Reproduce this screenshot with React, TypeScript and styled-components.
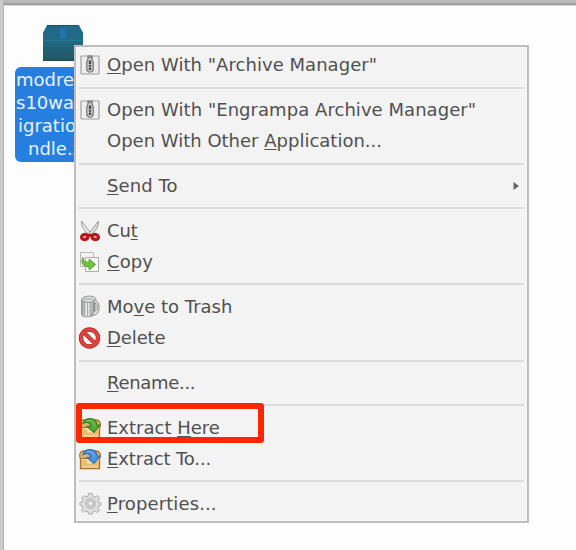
import React from "react";
import styled, { createGlobalStyle } from "styled-components";

const GlobalStyle = createGlobalStyle`
  * { box-sizing: border-box; }
  body { margin: 0; background: #fdfdfd; font-family: "DejaVu Sans", sans-serif; overflow: hidden; }
`;

const Desktop = styled.main`
  position: relative;
  width: 576px;
  height: 550px;
  overflow: hidden;
  background: #fdfdfd;
  border-left: 3px solid #cbcbcb;
  box-shadow: inset 1px 0 #b2b2b2;
`;

const TopBar = styled.div`
  height: 6px;
  margin-left: -3px;
  background: linear-gradient(#b9b9b9 0 3px, #a0a0a0 3px 5px, #d5d5d5 5px);
`;

const FileItem = styled.div`
  display: flex;
  flex-direction: column;
  align-items: center;
  width: 98px;
  margin: 18px 0 0 12px;
  svg { margin-left: -2px; }
`;

const FileLabel = styled.div`
  width: 98px;
  height: 95px;
  margin-top: 5px;
  padding: 1px 0 0 1px;
  border-radius: 6px;
  background: #267fdf;
  color: #e9f2fc;
  font-size: 18px;
  line-height: 23px;
  white-space: pre;
`;

const LabelLine = styled.div<{ $indent: number }>`
  padding-left: ${(p) => p.$indent}px;
`;

const Menu = styled.div`
  position: absolute;
  left: 71px;
  top: 45px;
  width: 455px;
  height: 478px;
  padding: 3.6px 4px;
  border: 1px solid #c0c0c0;
  box-shadow: inset 0 0 0 1px #b9b9b9, inset 0 0 0 2px #f8f8f8;
  background: #f3f3f3;
`;

const Row = styled.div`
  display: flex;
  align-items: center;
  height: 31.4px;
  color: #505050;
  font-size: 18px;
  line-height: 24px;
  white-space: pre;
`;

const IconSlot = styled.span`
  display: flex;
  flex: none;
  width: 22px;
  height: 24px;
  margin: 0 6px 0 0;
  align-items: center;
  justify-content: center;
  svg { display: block; flex: none; }
`;

const Label = styled.span<{ $spacing: number }>`
  flex: 1;
  letter-spacing: ${(p) => p.$spacing}px;
`;

const Mnemonic = styled.span`
  text-decoration: underline;
  text-decoration-thickness: 1.4px;
  text-underline-offset: 2px;
  text-decoration-skip-ink: none;
`;

const Separator = styled.div`
  display: flex;
  align-items: center;
  height: 13.3px;
  &::after { content: ""; flex: 1; height: 2px; background: #dcdcdc; }
`;

const Highlight = styled.div`
  position: absolute;
  left: 73px;
  top: 403px;
  width: 188px;
  height: 40px;
  border: 6px solid #ff2600;
  border-radius: 3px;
`;

const PackageIcon = () => (
  <svg width="42" height="38" viewBox="0 0 42 38">
    <defs>
      <linearGradient id="box" x1="0" y1="0" x2="0" y2="1">
        <stop offset="0" stopColor="#21759b" />
        <stop offset="1" stopColor="#225762" />
      </linearGradient>
    </defs>
    <path d="M5 1.500h32l4 7v28H1v-28z" fill="url(#box)" />
    <path d="M5 1.500h32l4 10H1z" fill="#216988" />
    <path d="M5 1.500h32" stroke="#1b5067" />
    <path d="M18 4h6v9l-3 1.500-3-1.500z" fill="#2372b5" />
    <path d="M1 16.500h40" stroke="#25779a" />
    <path d="M1 36.500h40" stroke="#1c4850" />
  </svg>
);

const ArchiveIcon = () => (
  <svg width="20" height="20" viewBox="0 0 20 20">
    <rect x="1" y="1" width="18" height="18" rx=".8" fill="#eeeeee" stroke="#a0a0a0" strokeWidth="1.200" />
    <path d="M8 1v3L6.800 7v8L8.500 17h3l1.700-2V7L12 4V1z" fill="#d0d0d0" stroke="#707070" strokeWidth="1.200" />
    <path d="M8 2.500h4" stroke="#777" />
    <path d="M10 5.500v9.500" stroke="#4b4b4b" strokeWidth="2.400" strokeDasharray="3.500 .8 2 .8" />
  </svg>
);

const CutIcon = () => (
  <svg width="22" height="22" viewBox="0 0 22 22">
    <path d="M2.500 1l10 13-2.500 1C6.500 11.500 2 7 2.500 1z" fill="#eee" stroke="#999" />
    <path d="M19.500 1l-10 13 2.500 1c3.500-3.500 8-8 7.500-14z" fill="#ddd" stroke="#999" />
    <ellipse cx="5.800" cy="17" rx="3.200" ry="2.600" transform="rotate(-15 5.800 17)" fill="#e9bcbc" stroke="#b9151f" strokeWidth="3.300" />
    <ellipse cx="16.200" cy="17" rx="3.200" ry="2.600" transform="rotate(15 16.200 17)" fill="#e9bcbc" stroke="#b9151f" strokeWidth="3.300" />
    <path d="M8 15l3-1.500 3 1.500-3 2z" fill="#ad1823" />
  </svg>
);

const CopyIcon = () => (
  <svg width="22" height="22" viewBox="0 0 22 22">
    <path d="M1.500 1.500h13v14h-13z" fill="#f3f3f3" stroke="#b7b7b7" />
    <path d="M6.500 6.500h13v14h-13z" fill="#fafafa" stroke="#aaa" />
    <path d="M4.200 6.500c0 3.500 1.500 4.700 6 4.700V8l6.300 5.500-6.300 5.200v-3.200c-6.500.5-9-4.200-6-9z" fill="#70c837" stroke="#4c982b" />
  </svg>
);

const TrashIcon = () => (
  <svg width="22" height="23" viewBox="0 0 22 23">
    <defs>
      <linearGradient id="can" x2="1">
        <stop stopColor="#939795" />
        <stop offset=".45" stopColor="#efefef" />
        <stop offset="1" stopColor="#a5a9a7" />
      </linearGradient>
    </defs>
    <path d="M2.500 5v15c2 2.500 10 2.500 12 0V5z" fill="url(#can)" stroke="#959997" />
    <path d="M5.500 7v13M8.500 7v14M11.500 7v14" stroke="#a5a9a7" />
    <path d="M2.500 5c1-5 12-5 14.500-1.500L15 6.500c-4 1-10 1-12.500-1.500z" fill="#e0e1e0" stroke="#929694" />
    <path d="M4 4h10" stroke="#999d9b" />
    <path d="M14.500 5c7-1 7.500 14 1 15h-3c4-3 3.500-10 2-15z" fill="#e0e0e0" stroke="#858a88" />
    <path d="M16 8c3 0 3 8 0 8z" fill="#eee" stroke="#858a88" />
  </svg>
);

const DeleteIcon = () => (
  <svg width="24" height="24" viewBox="0 0 24 24">
    <circle cx="11.500" cy="12" r="8.500" fill="#f7f7f7" stroke="#b92727" strokeWidth="4.400" />
    <circle cx="11.500" cy="12" r="8.500" fill="none" stroke="#d94541" strokeWidth="3" />
    <path d="M6 6.500l11 11" stroke="#bd2b2b" strokeWidth="4" />
    <path d="M5.800 6.300l11.400 11.400" stroke="#d94541" strokeWidth="2.700" />
  </svg>
);

const ExtractIcon = ({ color, edge }: { color: string; edge: string }) => (
  <svg width="22" height="22" viewBox="0 0 22 22">
    <path d="M1.500 11C-.5 5 2 3 5 3h12c4 0 5.500 4 3.500 8v9.500h-19z" fill="#e9bd72" stroke="#a77431" strokeWidth="1.300" />
    <path d="M3 5.500C4 4 6 4.500 7 4.500h10c2 0 2.500 3 1.500 6H3z" fill="#d9b274" />
    <path d="M2.500 11.500h17M3 19h16" stroke="#f6d79d" strokeWidth="1.400" />
    <path d="M1.500 10.500h19" stroke="#a77431" />
    <path d="M8 11.500h7v4H8z" fill="#f8dfa9" />
    <path d="M4 6.500C6 .5 17-1 18.200 8h2.600L15 15.500 8 9.500h3.500C11.500 5 7 4.500 4 6.500z" fill={color} stroke={edge} strokeWidth="1.100" />
    <path d="M7 4.500c4-2.500 8.500 0 8.500 5" fill="none" stroke="#fff" opacity=".35" />
  </svg>
);

const GearIcon = () => (
  <svg width="23" height="23" viewBox="0 0 24 24">
    <path d="M10 1.500h4l.6 3 2.100.9 2.500-1.700 2.300 2.600-1.700 2.500.8 2 2.200.5v2.700l-2.200.6-.9 2.100 1.700 2.500-2.500 2.200-2.400-1.600-2 .8-.5 2.400h-4l-.6-2.400-2.100-.9-2.500 1.600-2.200-2.500 1.500-2.400-.8-2-2.300-.5v-3l2.400-.6.8-2L2.700 6.200 5 3.800l2.400 1.500 2-.8z" fill="#dedede" stroke="#aaa" />
    <circle cx="12" cy="12" r="5" fill="#cecece" stroke="#c0c0c0" strokeWidth="1.500" />
    <circle cx="12" cy="12" r="2.600" fill="#f4f4f4" stroke="#b2b2b2" />
  </svg>
);

const SubmenuArrow = () => (
  <svg width="7" height="10" viewBox="0 0 7 10">
    <path d="M.5 1L6 5 .5 9z" fill="#666" />
  </svg>
);

const ArrowSlot = styled.span`
  display: flex;
  margin-right: 4px;
`;

interface Item {
  text: string;
  icon?: React.ReactNode;
  submenu?: boolean;
  spacing?: number;
}

// An underscore precedes the mnemonic letter of each entry.
const groups: Item[][] = [
  [{ text: '_Open With "Archive Manager"', icon: <ArchiveIcon />, spacing: 0.04 }],
  [
    { text: 'Open With "Engrampa Archive Manager"', icon: <ArchiveIcon />, spacing: 0.05 },
    { text: "Open With Other _Application..." },
  ],
  [{ text: "_Send To", submenu: true, spacing: 0.08 }],
  [
    { text: "Cu_t", icon: <CutIcon />, spacing: -0.1 },
    { text: "_Copy", icon: <CopyIcon />, spacing: 0.1 },
  ],
  [
    { text: "Mo_ve to Trash", icon: <TrashIcon /> },
    { text: "_Delete", icon: <DeleteIcon />, spacing: -0.1 },
  ],
  [{ text: "_Rename...", spacing: -0.3 }],
  [
    { text: "Extract _Here", icon: <ExtractIcon color="#55a732" edge="#398025" /> },
    { text: "_Extract To...", icon: <ExtractIcon color="#4c91de" edge="#2b6fb7" />, spacing: -0.15 },
  ],
  [{ text: "_Properties...", icon: <GearIcon />, spacing: 0.12 }],
];

const MenuRow = ({ item }: { item: Item }) => {
  const at = item.text.indexOf("_");
  return (
    <Row>
      <IconSlot>{item.icon}</IconSlot>
      <Label $spacing={item.spacing ?? 0}>
        {at < 0 ? item.text : (
          <>
            {item.text.slice(0, at)}
            <Mnemonic>{item.text[at + 1]}</Mnemonic>
            {item.text.slice(at + 2)}
          </>
        )}
      </Label>
      {item.submenu && <ArrowSlot><SubmenuArrow /></ArrowSlot>}
    </Row>
  );
};

export default function App() {
  return (
    <>
      <GlobalStyle />
      <Desktop>
        <TopBar />
        <FileItem>
          <PackageIcon />
          <FileLabel>
            <LabelLine $indent={0}>modre</LabelLine>
            <LabelLine $indent={0}>s10wa</LabelLine>
            <LabelLine $indent={2}>igratio</LabelLine>
            <LabelLine $indent={12}>ndle.z</LabelLine>
          </FileLabel>
        </FileItem>
        <Menu>
          {groups.map((group, i) => (
            <React.Fragment key={i}>
              {i > 0 && <Separator />}
              {group.map((item) => <MenuRow key={item.text} item={item} />)}
            </React.Fragment>
          ))}
        </Menu>
        <Highlight />
      </Desktop>
    </>
  );
}
